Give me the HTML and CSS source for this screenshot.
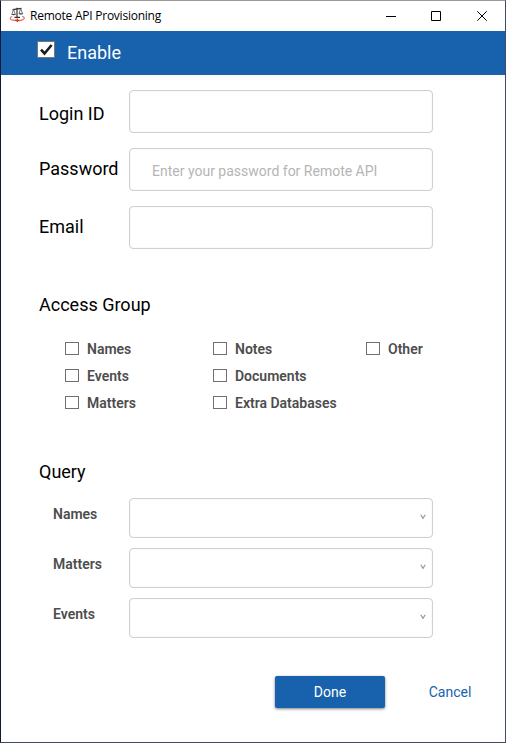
FILE: index.html
```html
<!DOCTYPE html>
<html lang="en">
<head>
  <meta charset="UTF-8">
  <title>Remote API Provisioning</title>
  <link rel="stylesheet" href="styles.css">
</head>
<body>
  <div class="window">
    <div class="titlebar">
      <svg class="app-icon" width="16" height="16" viewBox="0 0 16 16" fill="none">
        <path d="M3.200 9.500C.2 10.500.5 12.600 4 13.200c3 .6 6 .5 8.500-.1 3.500-.8 3.700-2.800.7-3.900" stroke="#df6f60" stroke-width="1.200"/>
        <path d="M6 13.300h4.500M8.300 11.500v3.500" stroke="#d9351f" stroke-width="1.300"/>
        <path d="M3.500 2.600l9-1.300M8 .7v9.300M5.500 10.300h5.500" stroke="#333" stroke-width="1.200"/>
        <path d="M4.500 2.500L2.800 7.500h3.600zM11.700 1.500L10 6.800h3.700z" stroke="#555" stroke-width=".8"/>
        <path d="M2.500 7.200h4.300q-2 2.200-4.300 0zM9.700 6.500h4.300q-2 2.200-4.300 0z" fill="#333"/>
      </svg>
      <span class="title">Remote API Provisioning</span>
      <svg class="controls" width="102" height="10" viewBox="0 0 102 10" fill="none" stroke="#000">
        <path d="M0 5.500h10"/>
        <path d="M45.500 .5h9v9h-9z"/>
        <path d="M91.300 .3l9.400 9.400M100.700 .3l-9.400 9.400"/>
      </svg>
    </div>

    <label class="enable">
      <input type="checkbox" class="enable-check" checked>
      <svg class="tick" width="18" height="17" viewBox="0 0 18 17" fill="none">
        <path d="M.5 .5h17v16H.5z" fill="#fff" stroke="#777"/>
        <path d="M4 8.700l3.500 3.800L14.600 4" stroke="#1c1c1c" stroke-width="2.600"/>
      </svg>
      <span>Enable</span>
    </label>

    <form class="login">
      <label for="login" class="lower">Login ID</label>
      <input type="text" id="login">
      <label for="password">Password</label>
      <input type="password" id="password" placeholder="Enter your password for Remote API">
      <label for="email">Email</label>
      <input type="text" id="email">
    </form>

    <h2 class="access-title">Access Group</h2>
    <div class="access">
      <label><input type="checkbox">Names</label>
      <label><input type="checkbox">Notes</label>
      <label><input type="checkbox">Other</label>
      <label><input type="checkbox">Events</label>
      <label><input type="checkbox">Documents</label>
      <span></span>
      <label><input type="checkbox">Matters</label>
      <label><input type="checkbox">Extra Databases</label>
    </div>

    <h2 class="query-title">Query</h2>
    <div class="query">
      <span>Names</span>
      <div class="select"><svg width="6" height="6" viewBox="0 0 6 6"><path d="M.8 .8L3 4.400 5.200 .8"/></svg></div>
      <span>Matters</span>
      <div class="select"><svg width="6" height="6" viewBox="0 0 6 6"><path d="M.8 .8L3 4.400 5.200 .8"/></svg></div>
      <span>Events</span>
      <div class="select"><svg width="6" height="6" viewBox="0 0 6 6"><path d="M.8 .8L3 4.400 5.200 .8"/></svg></div>
    </div>

    <div class="actions">
      <button class="done">Done</button>
      <button class="cancel">Cancel</button>
    </div>
  </div>
</body>
</html>
```

FILE: styles.css
```css
* {
  box-sizing: border-box;
}

body {
  margin: 0;
  font-family: Roboto, sans-serif;
  color: #000;
}

.window {
  height: 743px;
  background-color: #fff;
  border: 1px solid #101b33;
  border-top-color: #999;
  border-right-color: #414b63;
  border-bottom-color: #414b63;
}

.titlebar {
  display: flex;
  align-items: center;
  height: 30px;
  padding: 0 17px 0 8px;
}

.app-icon {
  margin-top: -2px;
}

.title {
  flex: 1;
  margin: -1px 0 0 5px;
  font: 12px "Open Sans", sans-serif;
  letter-spacing: -0.24px;
}

.enable {
  display: flex;
  align-items: center;
  height: 44px;
  padding: 0 0 2px 36px;
  background-color: #1862ad;
  color: #fff;
  font-size: 18px;
}

.enable-check {
  display: none;
}

.tick {
  margin: -5px 12px 0 0;
}

.login {
  display: grid;
  grid-template-columns: 90px 304px;
  grid-auto-rows: 43px;
  row-gap: 15px;
  padding: 15px 0 0 38px;
}

.login label {
  font-size: 18px;
  line-height: 41px;
}

.login .lower {
  line-height: 47px;
}

.login input {
  padding: 3px 22px 0;
  border: 1px solid #d0d0d0;
  border-radius: 4px;
  box-shadow: inset 0 0 1px #ccc;
  font: 14px Roboto, sans-serif;
}

.login input::placeholder {
  color: #b5b5b5;
}

h2 {
  margin: 0 0 0 38px;
  font-size: 18px;
  font-weight: 400;
  line-height: 22px;
}

.access-title {
  margin-top: 45px;
}

.access {
  display: grid;
  grid-template-columns: 148px 153px auto;
  grid-auto-rows: 27px;
  margin: 19px 0 0 64px;
}

.access label {
  display: flex;
  align-items: center;
  color: #4d4d4d;
  font-size: 14px;
  font-weight: 600;
}

.access input {
  appearance: none;
  width: 14px;
  height: 13px;
  margin: -1px 8px 0 0;
  border: 1px solid #707070;
}

.query-title {
  margin-top: 45px;
}

.query {
  display: grid;
  grid-template-columns: 76px 304px;
  grid-auto-rows: 40px;
  row-gap: 10px;
  margin: 15px 0 0 52px;
}

.query span {
  color: #4d4d4d;
  font-size: 14px;
  font-weight: 600;
  line-height: 33px;
}

.select {
  display: flex;
  justify-content: flex-end;
  align-items: center;
  padding: 0 6px 2px 0;
  border: 1px solid #d0d0d0;
  border-radius: 4px;
  box-shadow: inset 0 0 1px #ccc;
}

.select svg {
  fill: none;
  stroke: #999;
  stroke-width: 1.2;
}

.actions {
  display: flex;
  margin: 38px 0 0 274px;
}

button {
  flex-shrink: 0;
  height: 32px;
  padding: 0;
  border: none;
  border-radius: 2px;
  font: 14px Roboto, sans-serif;
}

.done {
  width: 110px;
  background-color: #1862ad;
  color: #fff;
  box-shadow: 0 1px 3px rgba(0, 0, 0, 0.5);
}

.cancel {
  width: 120px;
  padding-left: 10px;
  background: none;
  color: #1862ad;
}
```
